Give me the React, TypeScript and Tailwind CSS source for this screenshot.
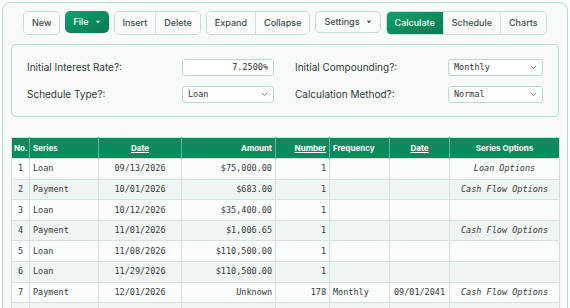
import React from 'react';

const mono = { fontFamily: '"DejaVu Sans Mono", "Liberation Mono", monospace' };

type Row = {
  no: number;
  series: string;
  date: string;
  amount: string;
  number: string;
  freq: string;
  end: string;
  options: string;
};

const ROWS: Row[] = [
  { no: 1, series: 'Loan', date: '09/13/2026', amount: '$75,000.00', number: '1', freq: '', end: '', options: 'Loan Options' },
  { no: 2, series: 'Payment', date: '10/01/2026', amount: '$683.00', number: '1', freq: '', end: '', options: 'Cash Flow Options' },
  { no: 3, series: 'Loan', date: '10/12/2026', amount: '$35,400.00', number: '1', freq: '', end: '', options: '' },
  { no: 4, series: 'Payment', date: '11/01/2026', amount: '$1,006.65', number: '1', freq: '', end: '', options: 'Cash Flow Options' },
  { no: 5, series: 'Loan', date: '11/08/2026', amount: '$110,500.00', number: '1', freq: '', end: '', options: '' },
  { no: 6, series: 'Loan', date: '11/29/2026', amount: '$110,500.00', number: '1', freq: '', end: '', options: '' },
  { no: 7, series: 'Payment', date: '12/01/2026', amount: 'Unknown', number: '178', freq: 'Monthly', end: '09/01/2041', options: 'Cash Flow Options' },
  { no: 8, series: '', date: '', amount: '', number: '', freq: '', end: '', options: '' },
];

const Caret = ({ className }: { className: string }) => (
  <svg width="6" height="4" viewBox="0 0 6 4" className={className}>
    <path d="M0.8 0.8 L5.2 0.8 L3 3.2 Z" fill="currentColor" />
  </svg>
);

const Chevron = () => (
  <svg width="7" height="5" viewBox="0 0 7 5" className="text-gray-500">
    <path d="M1 1 L3.5 3.5 L6 1" stroke="currentColor" strokeWidth="0.9" fill="none" />
  </svg>
);

const btn = 'h-[22px] px-[8px] flex items-center text-[9px] font-medium text-[#3d4b49] bg-[#fafcfc]';

const Group = ({ items, active }: { items: string[]; active?: string }) => (
  <div className="flex rounded-[5px] border border-[#bfe1d5] overflow-hidden">
    {items.map((it, i) => (
      <div
        key={it}
        className={`${btn} ${i > 0 ? 'border-l border-[#c9e4da]' : ''} ${
          it === active ? 'bg-gradient-to-br from-[#12a06e] to-[#077a51] text-white' : ''
        }`}
      >
        {it}
      </div>
    ))}
  </div>
);

const Select = ({ value }: { value: string }) => (
  <div className="w-[95px] h-[17px] rounded-[3px] border border-[#b4dccd] bg-white flex items-center justify-between pl-[5px] pr-[5px] text-[8.5px] text-[#333]" style={mono}>
    <span>{value}</span>
    <Chevron />
  </div>
);

export default function App() {
  return (
    <div className="w-[570px] h-[308px] overflow-hidden bg-white p-[2px]" style={{ fontFamily: 'Inter, "Noto Sans", sans-serif' }}>
      <div className="h-[320px] rounded-[8px] border border-[#b2dccd] bg-[#f8fafa] px-[8px] pt-[8px]">
        {/* Toolbar */}
        <div className="flex gap-[5px] pl-[12px]">
          <Group items={['New']} />
          <div className="h-[22px] px-[8px] flex items-center gap-[6px] rounded-[5px] text-[9px] font-medium text-white bg-gradient-to-br from-[#12a06e] to-[#077a51]">
            File <Caret className="text-white" />
          </div>
          <Group items={['Insert', 'Delete']} />
          <Group items={['Expand', 'Collapse']} />
          <div className={`${btn} gap-[6px] rounded-[5px] border border-[#bfe1d5]`}>
            Settings <Caret className="text-[#3d4b49]" />
          </div>
          <Group items={['Calculate', 'Schedule', 'Charts']} active="Calculate" />
        </div>

        {/* Settings panel */}
        <div className="mt-[9px] rounded-[5px] border border-[#b2dccd] bg-[#f8fafa] px-[15px] pt-[14px] pb-[13px] grid grid-cols-2 gap-x-[20px] gap-y-[10px] text-[10px] text-[#2f3a38]">
          <div className="flex items-center justify-between pr-[1px]">
            <span>Initial Interest Rate?:</span>
            <div className="w-[92px] h-[17px] rounded-[3px] border border-[#b4dccd] bg-white flex items-center justify-end pr-[5px] text-[8.5px] text-[#333]" style={mono}>
              7.2500%
            </div>
          </div>
          <div className="flex items-center justify-between">
            <span>Initial Compounding?:</span>
            <Select value="Monthly" />
          </div>
          <div className="flex items-center justify-between pr-[1px]">
            <span>Schedule Type?:</span>
            <div className="w-[92px] h-[17px] rounded-[3px] border border-[#b4dccd] bg-white flex items-center justify-between px-[5px] text-[8.5px] text-[#333]" style={mono}>
              <span>Loan</span>
              <Chevron />
            </div>
          </div>
          <div className="flex items-center justify-between">
            <span>Calculation Method?:</span>
            <Select value="Normal" />
          </div>
        </div>

        {/* Table */}
        <table className="mt-[20px] w-[548px] table-fixed border-collapse border border-[#cfe0db]">
          <colgroup>
            <col className="w-[18px]" />
            <col className="w-[69px]" />
            <col className="w-[83px]" />
            <col className="w-[94px]" />
            <col className="w-[54px]" />
            <col className="w-[60px]" />
            <col className="w-[60px]" />
            <col className="w-[110px]" />
          </colgroup>
          <thead>
            <tr className="h-[21px] bg-[#0b8a5d] text-white text-[8px] font-semibold">
              <th className="px-[2px] text-left border-r border-[#5fb596]">No.</th>
              <th className="px-[3px] text-left border-r border-[#5fb596]">Series</th>
              <th className="px-[3px] text-center underline border-r border-[#5fb596]">Date</th>
              <th className="px-[3px] text-right border-r border-[#5fb596]">Amount</th>
              <th className="px-[3px] text-right underline border-r border-[#5fb596]">Number</th>
              <th className="px-[3px] text-left border-r border-[#5fb596]">Frequency</th>
              <th className="px-[3px] text-center underline border-r border-[#5fb596]">Date</th>
              <th className="px-[3px] text-center">Series Options</th>
            </tr>
          </thead>
          <tbody className="text-[8.5px] text-[#353b3a]" style={mono}>
            {ROWS.map((r) => (
              <tr key={r.no} className={`h-[20.6px] border-t border-[#d5e3df] ${r.no % 2 === 0 ? 'bg-[#eef5f2]' : 'bg-[#fbfcfc]'}`}>
                <td className="px-[3px] text-center border-r border-[#d5e3df]">{r.no}</td>
                <td className="px-[3px] border-r border-[#d5e3df]">{r.series}</td>
                <td className="px-[3px] text-center border-r border-[#d5e3df]">{r.date}</td>
                <td className="px-[3px] text-right border-r border-[#d5e3df]">{r.amount}</td>
                <td className="px-[3px] text-right border-r border-[#d5e3df]">{r.number}</td>
                <td className="px-[3px] border-r border-[#d5e3df]">{r.freq}</td>
                <td className="px-[3px] text-center border-r border-[#d5e3df]">{r.end}</td>
                <td className="px-[3px] text-center italic">{r.options}</td>
              </tr>
            ))}
          </tbody>
        </table>
      </div>
    </div>
  );
}
